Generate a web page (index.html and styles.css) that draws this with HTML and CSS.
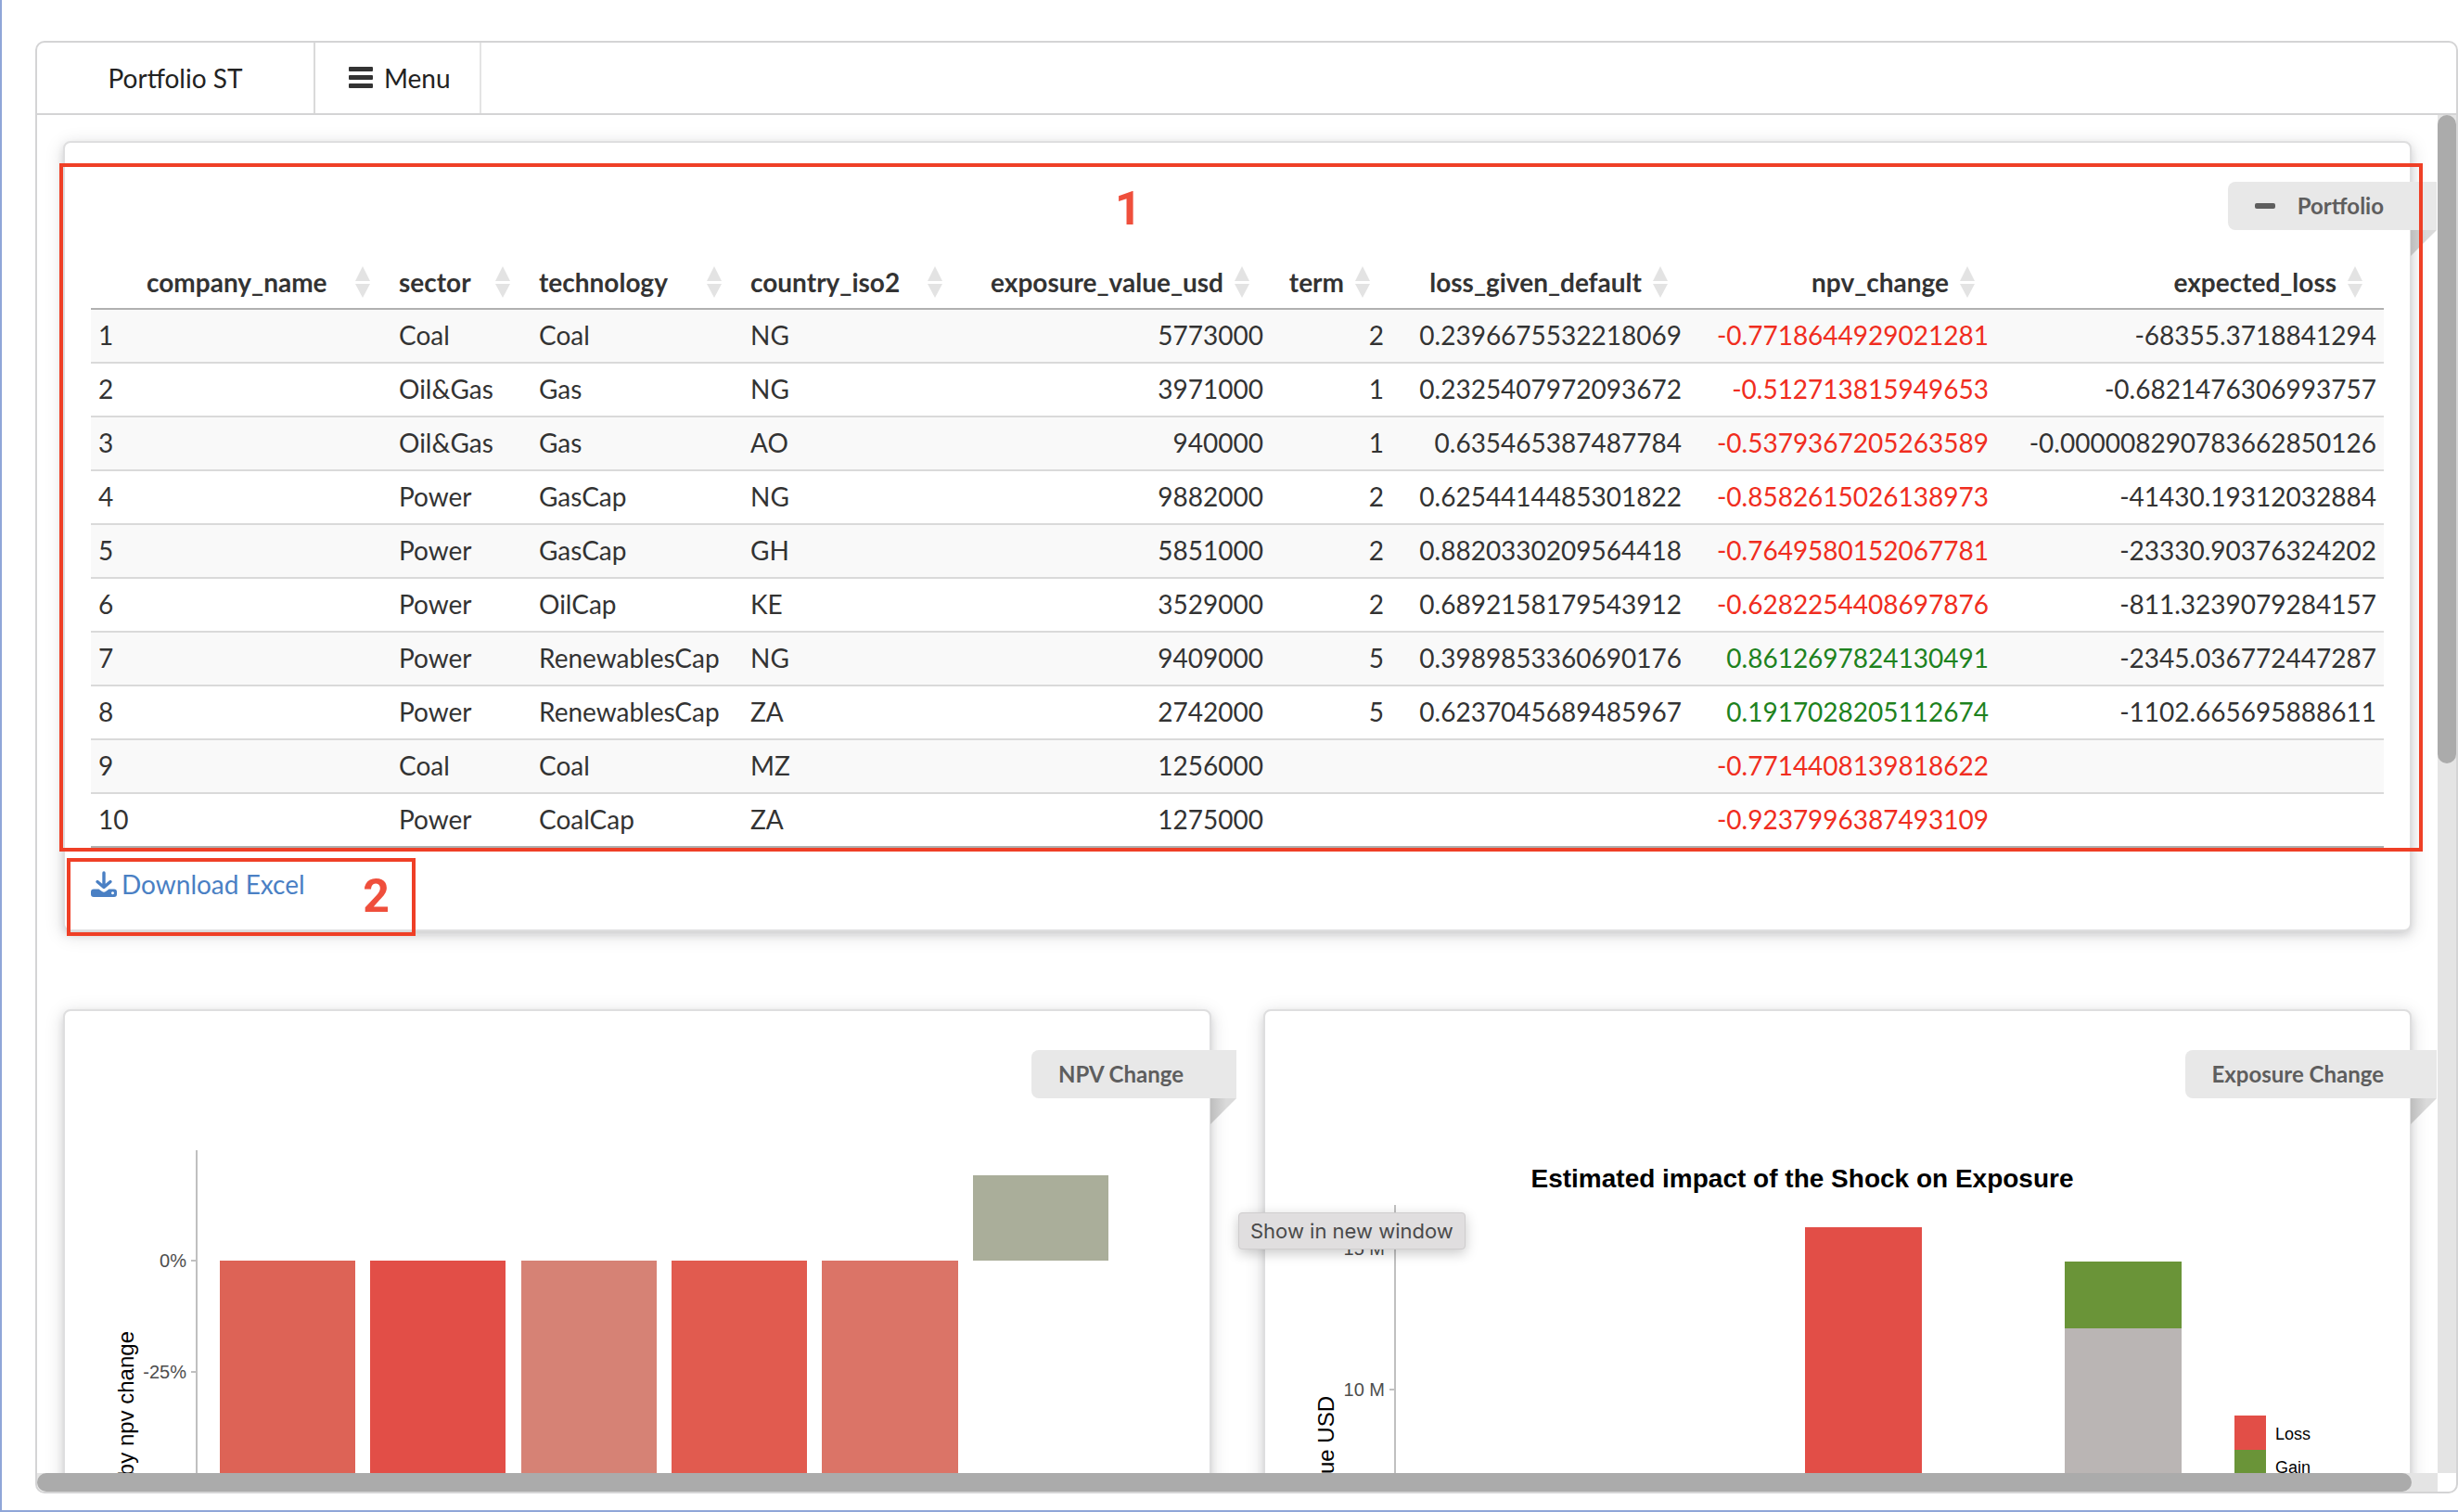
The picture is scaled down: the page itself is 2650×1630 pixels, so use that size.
FILE: index.html
```html
<!DOCTYPE html>
<html lang="en">
<head>
<meta charset="utf-8">
<title>Portfolio ST</title>
<link rel="stylesheet" href="styles.css">
</head>
<body>
<svg class="defs" aria-hidden="true">
  <symbol id="sort" viewBox="0 0 16 34"><path d="M8 0 16 16H0zM0 19H16L8 34z"/></symbol>
</svg>
<div class="frame">
  <nav class="navbar">
    <a class="nav-item brand" href="#">Portfolio ST</a>
    <button class="nav-item menu" type="button">
      <svg class="menu-icon" viewBox="0 0 26 24" aria-hidden="true"><rect y="0" width="26" height="5" rx="1"/><rect y="9" width="26" height="5" rx="1"/><rect y="18" width="26" height="5" rx="1"/></svg>
      Menu
    </button>
  </nav>
  <div class="scroller">
    <main class="pane">
      <section class="card portfolio">
        <button class="ribbon" type="button">
          <svg class="minus-icon" viewBox="0 0 22 6" aria-hidden="true"><rect width="22" height="6" rx="2"/></svg>
          Portfolio
        </button>
        <table class="data">
          <colgroup>
            <col class="c-index"><col class="c-company"><col class="c-sector"><col class="c-technology"><col class="c-country"><col class="c-exposure"><col class="c-term"><col class="c-lgd"><col class="c-npv"><col class="c-loss">
          </colgroup>
          <thead>
            <tr>
              <th></th>
              <th><button type="button">company_name<svg class="sort"><use href="#sort"/></svg></button></th>
              <th><button type="button">sector<svg class="sort"><use href="#sort"/></svg></button></th>
              <th><button type="button">technology<svg class="sort"><use href="#sort"/></svg></button></th>
              <th><button type="button">country_iso2<svg class="sort"><use href="#sort"/></svg></button></th>
              <th class="num"><button type="button">exposure_value_usd<svg class="sort"><use href="#sort"/></svg></button></th>
              <th class="num"><button type="button">term<svg class="sort"><use href="#sort"/></svg></button></th>
              <th class="num"><button type="button">loss_given_default<svg class="sort"><use href="#sort"/></svg></button></th>
              <th class="num"><button type="button">npv_change<svg class="sort"><use href="#sort"/></svg></button></th>
              <th class="num"><button type="button">expected_loss<svg class="sort"><use href="#sort"/></svg></button></th>
            </tr>
          </thead>
          <tbody>
            <tr><td>1</td><td></td><td>Coal</td><td>Coal</td><td>NG</td><td class="num">5773000</td><td class="num">2</td><td class="num">0.2396675532218069</td><td class="num down">-0.7718644929021281</td><td class="num">-68355.3718841294</td></tr>
            <tr><td>2</td><td></td><td>Oil&amp;Gas</td><td>Gas</td><td>NG</td><td class="num">3971000</td><td class="num">1</td><td class="num">0.2325407972093672</td><td class="num down">-0.512713815949653</td><td class="num">-0.6821476306993757</td></tr>
            <tr><td>3</td><td></td><td>Oil&amp;Gas</td><td>Gas</td><td>AO</td><td class="num">940000</td><td class="num">1</td><td class="num">0.635465387487784</td><td class="num down">-0.5379367205263589</td><td class="num">-0.000008290783662850126</td></tr>
            <tr><td>4</td><td></td><td>Power</td><td>GasCap</td><td>NG</td><td class="num">9882000</td><td class="num">2</td><td class="num">0.6254414485301822</td><td class="num down">-0.8582615026138973</td><td class="num">-41430.19312032884</td></tr>
            <tr><td>5</td><td></td><td>Power</td><td>GasCap</td><td>GH</td><td class="num">5851000</td><td class="num">2</td><td class="num">0.8820330209564418</td><td class="num down">-0.7649580152067781</td><td class="num">-23330.90376324202</td></tr>
            <tr><td>6</td><td></td><td>Power</td><td>OilCap</td><td>KE</td><td class="num">3529000</td><td class="num">2</td><td class="num">0.6892158179543912</td><td class="num down">-0.6282254408697876</td><td class="num">-811.3239079284157</td></tr>
            <tr><td>7</td><td></td><td>Power</td><td>RenewablesCap</td><td>NG</td><td class="num">9409000</td><td class="num">5</td><td class="num">0.3989853360690176</td><td class="num up">0.8612697824130491</td><td class="num">-2345.036772447287</td></tr>
            <tr><td>8</td><td></td><td>Power</td><td>RenewablesCap</td><td>ZA</td><td class="num">2742000</td><td class="num">5</td><td class="num">0.6237045689485967</td><td class="num up">0.1917028205112674</td><td class="num">-1102.665695888611</td></tr>
            <tr><td>9</td><td></td><td>Coal</td><td>Coal</td><td>MZ</td><td class="num">1256000</td><td></td><td></td><td class="num down">-0.7714408139818622</td><td></td></tr>
            <tr><td>10</td><td></td><td>Power</td><td>CoalCap</td><td>ZA</td><td class="num">1275000</td><td></td><td></td><td class="num down">-0.9237996387493109</td><td></td></tr>
          </tbody>
        </table>
        <a class="download" href="#">
          <svg class="download-icon" viewBox="0 0 28 28" aria-hidden="true"><path d="M14 2V16M7 11.500 14 17.500 21 11.500" fill="none" stroke="currentColor" stroke-width="3.400" stroke-linecap="round" stroke-linejoin="round"/><path fill="currentColor" fill-rule="evenodd" d="M3 19.500H8.500L12 22Q14 23.500 16 22L19.500 19.500H25Q28 19.500 28 22.500V25Q28 28 25 28H3Q0 28 0 25V22.500Q0 19.500 3 19.500ZM23.500 22.200A1.500 1.500 0 1 0 23.510 22.200Z"/></svg>
          Download Excel
        </a>
        <div class="mark mark-table"><span>1</span></div>
        <div class="mark mark-download"><span>2</span></div>
      </section>

      <div class="charts">
        <section class="card">
          <div class="ribbon">NPV Change</div>
          <svg class="chart" viewBox="0 0 1234 640" role="img" aria-label="NPV change by technology">
            <g class="axis"><path d="M142 150V640M136 269H142M136 389H142"/></g>
            <g class="tick-label"><text x="131" y="276">0%</text><text x="131" y="396">-25%</text></g>
            <text class="axis-title" transform="translate(74 345) rotate(-90)">by npv change</text>
            <rect x="167" y="269" width="146" height="371" fill="#dd6356"/>
            <rect x="329" y="269" width="146" height="371" fill="#e24e47"/>
            <rect x="492" y="269" width="146" height="371" fill="#d68275"/>
            <rect x="654" y="269" width="146" height="371" fill="#e15b4f"/>
            <rect x="816" y="269" width="147" height="371" fill="#db7467"/>
            <rect x="979" y="177" width="146" height="92" fill="#aaae9a"/>
          </svg>
        </section>
        <section class="card">
          <div class="ribbon">Exposure Change</div>
          <svg class="chart" viewBox="0 0 1234 640" role="img" aria-label="Exposure change by technology">
            <text class="chart-title" x="579" y="190">Estimated impact of the Shock on Exposure</text>
            <g class="axis"><path d="M140 209V640M134 255H140M134 408H140"/></g>
            <g class="tick-label"><text x="129" y="263">15 M</text><text x="129" y="415">10 M</text></g>
            <text class="axis-title" transform="translate(74 415) rotate(-90)">Value USD</text>
            <rect x="582" y="233" width="126" height="407" fill="#e24e47"/>
            <rect x="862" y="270" width="126" height="72" fill="#6a9438"/>
            <rect x="862" y="342" width="126" height="298" fill="#bab5b4"/>
            <rect x="1045" y="436" width="34" height="37" fill="#e24e47"/>
            <rect x="1045" y="473" width="34" height="36" fill="#6a9438"/>
            <g class="legend-label"><text x="1089" y="462">Loss</text><text x="1089" y="498">Gain</text></g>
          </svg>
          <div class="tooltip" role="tooltip">Show in new window</div>
        </section>
      </div>
    </main>
    <div class="track track-y"><div class="thumb" style="height:47.750%"></div></div>
    <div class="track track-x"><div class="thumb" style="width:98.920%"></div></div>
  </div>
</div>
</body>
</html>
```
FILE: styles.css
```css
* { box-sizing: border-box; }

body {
  margin: 0;
  height: 100vh;
  display: flex;
  padding: 44px 0 18px 36px;
  border: solid #8fa6d8;
  border-width: 0 0 2px 2px;
  background: #fff;
  color: #333;
  font: 28px/40px Lato, "Open Sans", sans-serif;
}

button {
  border: 0;
  margin: 0;
  padding: 0;
  background: none;
  color: inherit;
  font: inherit;
}

a { text-decoration: none; }

.defs { position: absolute; width: 0; height: 0; }

.frame {
  flex: 1;
  min-width: 0;
  display: flex;
  flex-direction: column;
  border: 2px solid #d4d4d5;
  border-radius: 10px;
  overflow: hidden;
}

.navbar {
  display: flex;
  height: 78px;
  flex: none;
  border-bottom: 2px solid #d4d4d5;
}

.nav-item {
  display: flex;
  align-items: center;
  border-right: 2px solid #e4e4e4;
  color: #222;
}

.brand {
  width: 300px;
  justify-content: center;
  border-color: #dadada;
}

.menu {
  gap: 12px;
  padding: 0 31px 0 36px;
}

.menu-icon { width: 26px; height: 24px; fill: #333; }

.scroller {
  flex: 1;
  min-height: 0;
  display: grid;
  grid-template: minmax(0, 1fr) 20px / minmax(0, 1fr) 20px;
}

.pane { overflow: hidden; padding: 28px; }

.track { background: #e4e4e4; }
.thumb { background: #ababab; border-radius: 10px; height: 100%; }

.card {
  position: relative;
  border: 2px solid #dededf;
  border-radius: 8px;
  background: #fff;
  box-shadow: 0 4px 8px rgba(34, 36, 38, .12), 0 4px 20px rgba(34, 36, 38, .15);
}

.portfolio { padding: 122px 28px 28px; margin-bottom: 84px; }

.ribbon {
  position: absolute;
  top: 42px;
  right: -29px;
  display: flex;
  align-items: center;
  gap: 24px;
  height: 52px;
  padding: 0 57px 0 29px;
  border-radius: 8px 0 0 8px;
  background: #e8e8e8;
  color: #5e5e5e;
  font-size: 24px;
  font-weight: 700;
}

.ribbon::after {
  content: "";
  position: absolute;
  top: 100%;
  right: 0;
  width: 28px;
  height: 28px;
  background: linear-gradient(90deg, #bdbdbd, #dadada 60%);
  clip-path: polygon(0 0, 100% 0, 0 100%);
}

.minus-icon { width: 22px; height: 6px; fill: #5e5e5e; }

.data {
  width: 100%;
  table-layout: fixed;
  border-collapse: separate;
  border-spacing: 0;
  border-bottom: 2px solid #b0b0b0;
}

.c-index { width: 52px; }
.c-company { width: 272px; }
.c-sector { width: 151px; }
.c-technology { width: 228px; }
.c-country { width: 238px; }
.c-exposure { width: 331px; }
.c-term { width: 130px; }
.c-lgd { width: 321px; }
.c-npv { width: 331px; }
.c-loss { width: 418px; }

.data th { padding: 0; border-bottom: 2px solid #b0b0b0; text-align: left; }

.data th button {
  display: flex;
  align-items: center;
  justify-content: space-between;
  gap: 12px;
  width: 100%;
  height: 56px;
  padding: 0 23px 0 8px;
  font-weight: 700;
}

.data th.num button { justify-content: flex-end; }

.sort { width: 16px; height: 34px; flex: none; fill: #e3e3e3; }

.data td {
  padding: 7px 8px 9px;
  border-bottom: 2px solid #dadada;
  white-space: nowrap;
}

.data tr:last-child td { border-bottom: 0; }
.data tbody tr:nth-child(odd) { background: #f9f9f9; }
.data .num { text-align: right; }
.data .down { color: #f02d20; }
.data .up { color: #1e821e; }

.download {
  display: inline-flex;
  align-items: center;
  gap: 5px;
  margin-top: 19px;
  padding-bottom: 1px;
  vertical-align: top;
  color: #4a80c4;
}

.download-icon { width: 28px; height: 28px; }

.mark {
  position: absolute;
  border: 4px solid #ef3f26;
  pointer-events: none;
  color: #ef4f3c;
  font: 700 50px/50px Roboto, "Liberation Sans", sans-serif;
}

.mark-table { inset: 22px -14px 84px -6px; padding: 20px 0 0 1134px; }

.mark-download {
  left: 2px;
  bottom: -7px;
  width: 376px;
  height: 84px;
  padding: 12px 24px;
  text-align: right;
}

.charts {
  display: grid;
  grid-template-columns: 1fr 1fr;
  gap: 56px;
}

.chart {
  display: block;
  width: 100%;
  font-family: "Liberation Sans", Arial, sans-serif;
}

.axis { fill: none; stroke: #c0c0c0; stroke-width: 2px; }
.tick-label { font-size: 20px; fill: #4d4d4d; text-anchor: end; }
.axis-title { font-size: 24px; fill: #000; text-anchor: end; }
.chart-title { font-size: 28px; font-weight: 700; fill: #000; text-anchor: middle; }
.legend-label { font-size: 18px; fill: #000; }

.tooltip {
  position: absolute;
  top: 217px;
  left: -29px;
  padding: 0 12px;
  border: 1px solid #cfcdce;
  border-radius: 4px;
  background: #e0dedf;
  box-shadow: 0 4px 14px rgba(0, 0, 0, .22);
  color: #4a4a4a;
  font: 22px/38px Inter, "Liberation Sans", sans-serif;
  white-space: nowrap;
}
```
